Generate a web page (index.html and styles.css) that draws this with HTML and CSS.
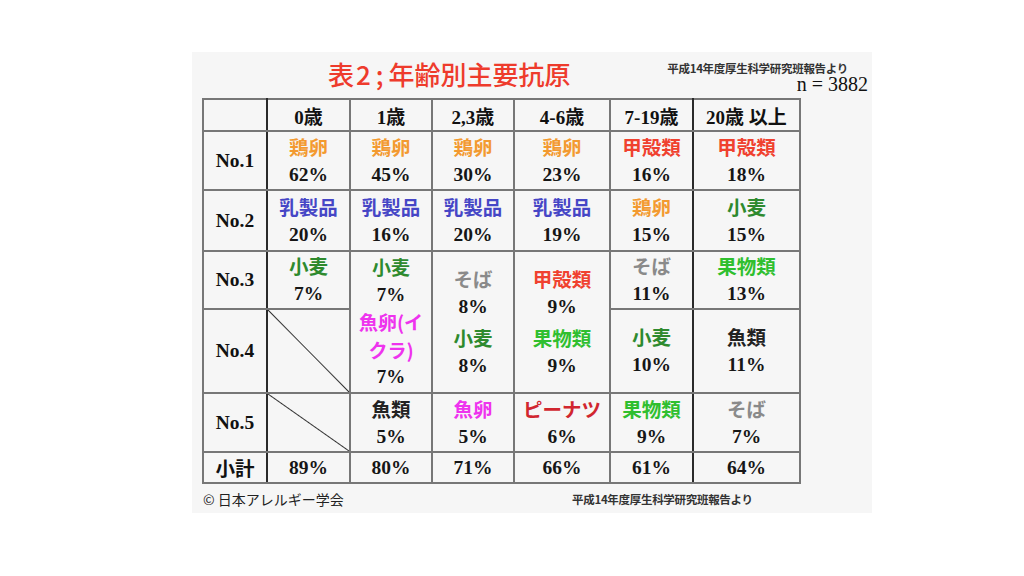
FILE: index.html
```html
<!DOCTYPE html>
<html lang="ja">
<head>
<meta charset="utf-8">
<title>表2;年齢別主要抗原</title>
<link rel="stylesheet" href="styles.css">
</head>
<body>
<div class="slide">
  <header class="head">
    <h1 class="title">表<span class="num">2;</span>年齢別主要抗原</h1>
    <div class="meta">
      <div class="source">平成14年度厚生科学研究班報告より</div>
      <div class="count">n = 3882</div>
    </div>
  </header>
  <table class="grid">
    <colgroup>
      <col class="c0"><col class="c1"><col class="c2"><col class="c3"><col class="c4"><col class="c5"><col class="c6">
    </colgroup>
    <tr class="r-head">
      <th class="lab"></th>
      <th>0歳</th><th>1歳</th><th>2,3歳</th><th>4-6歳</th><th class="dk">7-19歳</th><th>20歳 以上</th>
    </tr>
    <tr class="r1">
      <th class="lab">No.1</th>
      <td><span class="f egg">鶏卵</span><span class="p">62%</span></td>
      <td><span class="f egg">鶏卵</span><span class="p">45%</span></td>
      <td><span class="f egg">鶏卵</span><span class="p">30%</span></td>
      <td><span class="f egg">鶏卵</span><span class="p">23%</span></td>
      <td class="dk"><span class="f crus">甲殻類</span><span class="p">16%</span></td>
      <td><span class="f crus">甲殻類</span><span class="p">18%</span></td>
    </tr>
    <tr class="r2">
      <th class="lab">No.2</th>
      <td><span class="f milk">乳製品</span><span class="p">20%</span></td>
      <td><span class="f milk">乳製品</span><span class="p">16%</span></td>
      <td><span class="f milk">乳製品</span><span class="p">20%</span></td>
      <td><span class="f milk">乳製品</span><span class="p">19%</span></td>
      <td class="dk"><span class="f egg">鶏卵</span><span class="p">15%</span></td>
      <td><span class="f wheat">小麦</span><span class="p">15%</span></td>
    </tr>
    <tr class="r3">
      <th class="lab">No.3</th>
      <td><span class="f wheat">小麦</span><span class="p">7%</span></td>
      <td rowspan="2" class="tight">
        <span class="f wheat">小麦</span><span class="p">7%</span>
        <span class="f roe">魚卵(イ</span><span class="f roe">クラ)</span><span class="p">7%</span>
      </td>
      <td rowspan="2">
        <div class="pair"><span class="f soba">そば</span><span class="p">8%</span></div>
        <div class="pair"><span class="f wheat">小麦</span><span class="p">8%</span></div>
      </td>
      <td rowspan="2">
        <div class="pair"><span class="f crus">甲殻類</span><span class="p">9%</span></div>
        <div class="pair"><span class="f fruit">果物類</span><span class="p">9%</span></div>
      </td>
      <td class="dk"><span class="f soba">そば</span><span class="p">11%</span></td>
      <td><span class="f fruit">果物類</span><span class="p">13%</span></td>
    </tr>
    <tr class="r4">
      <th class="lab">No.4</th>
      <td class="diag"></td>
      <td class="dk"><span class="f wheat">小麦</span><span class="p">10%</span></td>
      <td><span class="f fish">魚類</span><span class="p">11%</span></td>
    </tr>
    <tr class="r5">
      <th class="lab">No.5</th>
      <td class="diag"></td>
      <td><span class="f fish">魚類</span><span class="p">5%</span></td>
      <td><span class="f roe">魚卵</span><span class="p">5%</span></td>
      <td><span class="f nut">ピーナツ</span><span class="p">6%</span></td>
      <td class="dk"><span class="f fruit">果物類</span><span class="p">9%</span></td>
      <td><span class="f soba">そば</span><span class="p">7%</span></td>
    </tr>
    <tr class="r-sum">
      <th class="lab sum">小計</th>
      <td><span class="p">89%</span></td>
      <td><span class="p">80%</span></td>
      <td><span class="p">71%</span></td>
      <td><span class="p">66%</span></td>
      <td class="dk"><span class="p">61%</span></td>
      <td><span class="p">64%</span></td>
    </tr>
  </table>
  <footer class="foot">
    <span class="copy">© 日本アレルギー学会</span>
    <span class="source2">平成14年度厚生科学研究班報告より</span>
  </footer>
</div>
</body>
</html>
```

FILE: styles.css
```css
html, body {
  margin: 0;
  padding: 0;
  background: #ffffff;
}

body {
  font-family: "Noto Sans CJK JP", "Noto Sans", sans-serif;
  color: #1a1a1a;
}

.slide {
  width: 680px;
  height: 461px;
  margin: 52px 0 0 192px;
  background: #f6f6f6;
  display: flex;
  flex-direction: column;
  box-sizing: border-box;
  padding: 0 4px 0 10px;
}

.head {
  height: 48px;
  display: flex;
  align-items: flex-start;
}

.title {
  margin: 7px 0 0 126px;
  font-size: 26px;
  line-height: 30px;
  font-weight: 500;
  color: #ee3b2c;
  letter-spacing: 0;
  white-space: nowrap;
}

.title .num {
  letter-spacing: 5px;
  margin-left: 2px;
}

.meta {
  margin-left: auto;
  text-align: right;
}

.source {
  margin: 10px 20px 0 0;
  font-size: 11.5px;
  line-height: 12px;
  font-weight: 700;
  color: #333;
  letter-spacing: -0.3px;
}

.count {
  font-family: "Liberation Serif", serif;
  font-size: 20px;
  line-height: 20px;
  color: #111;
}

.grid {
  width: 597px;
  border-collapse: collapse;
  table-layout: fixed;
  border: 2px solid #2a2a2a;
}

.c0 { width: 64px; }
.c1 { width: 83px; }
.c2 { width: 82px; }
.c3 { width: 82px; }
.c4 { width: 96px; }
.c5 { width: 83px; }
.c6 { width: 107px; }

.grid th,
.grid td {
  border: 2px solid #777;
  padding: 0;
  text-align: center;
  vertical-align: middle;
}

.grid .lab {
  border-right-color: #2a2a2a;
}

.grid .dk {
  border-right-color: #2a2a2a;
}

.r-head { height: 32px; }
.r1 { height: 59px; }
.r2 { height: 61px; }
.r3 { height: 57px; }
.r4 { height: 84px; }
.r5 { height: 59px; }
.r-sum { height: 31px; }

.r-head th {
  font-family: "Liberation Serif", "Noto Sans CJK JP", serif;
  font-size: 19px;
  font-weight: 700;
  color: #111;
}

.lab {
  font-family: "Liberation Serif", serif;
  font-size: 19.5px;
  font-weight: 700;
  color: #111;
}

.lab.sum {
  font-family: "Noto Sans CJK JP", sans-serif;
  font-size: 19.5px;
  font-weight: 700;
}

.f {
  display: block;
  font-family: "Noto Sans CJK JP", sans-serif;
  font-size: 19.5px;
  line-height: 28px;
  font-weight: 700;
  white-space: nowrap;
}

.p {
  display: block;
  font-family: "Liberation Serif", serif;
  font-size: 19.5px;
  line-height: 28px;
  font-weight: 700;
  color: #161616;
}

.r-sum .p {
  line-height: 26px;
}

.tight .f,
.tight .p {
  font-size: 19px;
  line-height: 27.5px;
}

.pair + .pair {
  margin-top: 4px;
}

.pair .f,
.pair .p {
  line-height: 27.5px;
}

.egg { color: #f39a30; }
.milk { color: #4646c6; }
.wheat { color: #2e8a2e; }
.soba { color: #8a8a8a; }
.crus { color: #f0412f; }
.fruit { color: #2fbf2f; }
.roe { color: #ee33ee; }
.fish { color: #222; }
.nut { color: #d1262f; }

.diag {
  background: linear-gradient(to top right,
    transparent calc(50% - 1px),
    #333 50%,
    transparent calc(50% + 1px));
}

.foot {
  display: flex;
  align-items: center;
  height: 30px;
}

.copy {
  width: 369px;
  padding-left: 1px;
  font-size: 14px;
  line-height: 28px;
  color: #222;
}

.source2 {
  font-size: 11.5px;
  line-height: 28px;
  font-weight: 700;
  color: #333;
  letter-spacing: -0.3px;
}
```
